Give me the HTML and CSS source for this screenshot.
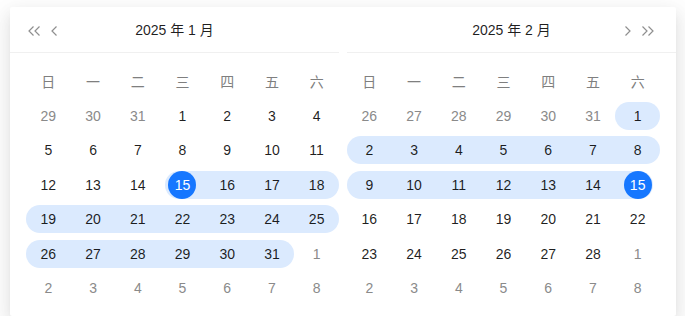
FILE: index.html
```html
<!DOCTYPE html>
<html lang="zh">
<head>
<meta charset="utf-8">
<link rel="stylesheet" href="styles.css">
</head>
<body>
<div class="picker">
  <div class="panel panel-left">
    <div class="head">
      <div class="nav nav-l">
        <svg class="ic2" width="13" height="10" viewBox="0 0 13 10"><polyline points="5.5,0.5 1,5 5.5,9.5"/><polyline points="11.5,0.5 7,5 11.5,9.5"/></svg>
        <svg class="ic1" width="6" height="10" viewBox="0 0 6 10"><polyline points="5.5,0.5 1,5 5.5,9.5"/></svg>
      </div>
      <div class="title">2025 年 1 月</div>
      <div class="nav"></div>
    </div>
    <div class="grid">
      <div class="wd">日</div><div class="wd">一</div><div class="wd">二</div><div class="wd">三</div><div class="wd">四</div><div class="wd">五</div><div class="wd">六</div>
      <div class="cell o"><span class="num">29</span></div><div class="cell o"><span class="num">30</span></div><div class="cell o"><span class="num">31</span></div><div class="cell"><span class="num">1</span></div><div class="cell"><span class="num">2</span></div><div class="cell"><span class="num">3</span></div><div class="cell"><span class="num">4</span></div>
      <div class="cell"><span class="num">5</span></div><div class="cell"><span class="num">6</span></div><div class="cell"><span class="num">7</span></div><div class="cell"><span class="num">8</span></div><div class="cell"><span class="num">9</span></div><div class="cell"><span class="num">10</span></div><div class="cell"><span class="num">11</span></div>
      <div class="cell"><span class="num">12</span></div><div class="cell"><span class="num">13</span></div><div class="cell"><span class="num">14</span></div><div class="cell r ss sel"><span class="num">15</span></div><div class="cell r"><span class="num">16</span></div><div class="cell r"><span class="num">17</span></div><div class="cell r re"><span class="num">18</span></div>
      <div class="cell r rs"><span class="num">19</span></div><div class="cell r"><span class="num">20</span></div><div class="cell r"><span class="num">21</span></div><div class="cell r"><span class="num">22</span></div><div class="cell r"><span class="num">23</span></div><div class="cell r"><span class="num">24</span></div><div class="cell r re"><span class="num">25</span></div>
      <div class="cell r rs"><span class="num">26</span></div><div class="cell r"><span class="num">27</span></div><div class="cell r"><span class="num">28</span></div><div class="cell r"><span class="num">29</span></div><div class="cell r"><span class="num">30</span></div><div class="cell r re"><span class="num">31</span></div><div class="cell o"><span class="num">1</span></div>
      <div class="cell o"><span class="num">2</span></div><div class="cell o"><span class="num">3</span></div><div class="cell o"><span class="num">4</span></div><div class="cell o"><span class="num">5</span></div><div class="cell o"><span class="num">6</span></div><div class="cell o"><span class="num">7</span></div><div class="cell o"><span class="num">8</span></div>
    </div>
  </div>
  <div class="panel panel-right">
    <div class="head">
      <div class="nav"></div>
      <div class="title">2025 年 2 月</div>
      <div class="nav nav-r">
        <svg class="ic1" width="6" height="10" viewBox="0 0 6 10"><polyline points="0.5,0.5 5,5 0.5,9.5"/></svg>
        <svg class="ic2" width="13" height="10" viewBox="0 0 13 10"><polyline points="1.5,0.5 6,5 1.5,9.5"/><polyline points="7.5,0.5 12,5 7.5,9.5"/></svg>
      </div>
    </div>
    <div class="grid">
      <div class="wd">日</div><div class="wd">一</div><div class="wd">二</div><div class="wd">三</div><div class="wd">四</div><div class="wd">五</div><div class="wd">六</div>
      <div class="cell o"><span class="num">26</span></div><div class="cell o"><span class="num">27</span></div><div class="cell o"><span class="num">28</span></div><div class="cell o"><span class="num">29</span></div><div class="cell o"><span class="num">30</span></div><div class="cell o"><span class="num">31</span></div><div class="cell r rs re"><span class="num">1</span></div>
      <div class="cell r rs"><span class="num">2</span></div><div class="cell r"><span class="num">3</span></div><div class="cell r"><span class="num">4</span></div><div class="cell r"><span class="num">5</span></div><div class="cell r"><span class="num">6</span></div><div class="cell r"><span class="num">7</span></div><div class="cell r re"><span class="num">8</span></div>
      <div class="cell r rs"><span class="num">9</span></div><div class="cell r"><span class="num">10</span></div><div class="cell r"><span class="num">11</span></div><div class="cell r"><span class="num">12</span></div><div class="cell r"><span class="num">13</span></div><div class="cell r"><span class="num">14</span></div><div class="cell r se sel"><span class="num">15</span></div>
      <div class="cell"><span class="num">16</span></div><div class="cell"><span class="num">17</span></div><div class="cell"><span class="num">18</span></div><div class="cell"><span class="num">19</span></div><div class="cell"><span class="num">20</span></div><div class="cell"><span class="num">21</span></div><div class="cell"><span class="num">22</span></div>
      <div class="cell"><span class="num">23</span></div><div class="cell"><span class="num">24</span></div><div class="cell"><span class="num">25</span></div><div class="cell"><span class="num">26</span></div><div class="cell"><span class="num">27</span></div><div class="cell"><span class="num">28</span></div><div class="cell o"><span class="num">1</span></div>
      <div class="cell o"><span class="num">2</span></div><div class="cell o"><span class="num">3</span></div><div class="cell o"><span class="num">4</span></div><div class="cell o"><span class="num">5</span></div><div class="cell o"><span class="num">6</span></div><div class="cell o"><span class="num">7</span></div><div class="cell o"><span class="num">8</span></div>
    </div>
  </div>
</div>
</body>
</html>
```
FILE: styles.css
```css
html, body {
  margin: 0;
  padding: 0;
  background: #ffffff;
}
body {
  padding: 7px 0 0 10px;
  font-family: "Liberation Sans", Arial, "Noto Sans CJK SC", sans-serif;
  font-size: 14px;
  color: rgba(0, 0, 0, 0.88);
}
.picker {
  width: 666px;
  height: 309px;
  background: #fff;
  display: flex;
  gap: 8px;
  border-radius: 2px;
  box-shadow: 0 6px 16px 0 rgba(0, 0, 0, 0.08), 0 3px 6px -4px rgba(0, 0, 0, 0.12), 0 9px 28px 8px rgba(0, 0, 0, 0.05);
}
.panel {
  width: 329px;
  display: flex;
  flex-direction: column;
}
.head {
  height: 46px;
  box-sizing: border-box;
  border-bottom: 1px solid #f0f0f0;
  display: grid;
  grid-template-columns: 1fr auto 1fr;
  align-items: center;
}
.title {
  font-size: 14px;
  color: rgba(0, 0, 0, 0.88);
  line-height: 20px;
  padding-top: 1px;
}
.nav {
  display: flex;
  align-items: center;
  padding-top: 3px;
}
.nav-l {
  padding-left: 18px;
  gap: 10px;
}
.nav-r {
  justify-content: flex-end;
  padding-right: 22px;
  gap: 10px;
}
.nav svg polyline {
  fill: none;
  stroke: #8f8f8f;
  stroke-width: 1.2;
}
.grid {
  display: grid;
  grid-template-columns: repeat(7, 1fr);
  grid-auto-rows: 34.5px;
  width: 313px;
  padding-top: 11px;
}
.panel-left .grid {
  margin-left: 16px;
}
.wd {
  display: flex;
  align-items: center;
  justify-content: center;
  font-family: "Noto Sans CJK SC", sans-serif;
  font-size: 14px;
  color: #7f7f7f;
}
.cell {
  position: relative;
  display: flex;
  align-items: center;
  justify-content: center;
}
.cell.r::before {
  content: "";
  position: absolute;
  left: 0;
  right: 0;
  top: 3.25px;
  bottom: 3.25px;
  background: #dbeafe;
}
.cell.rs::before,
.cell.ss::before {
  border-top-left-radius: 14px;
  border-bottom-left-radius: 14px;
}
.cell.re::before,
.cell.se::before {
  border-top-right-radius: 14px;
  border-bottom-right-radius: 14px;
}
.cell.ss::before {
  left: calc(50% - 17px);
}
.cell.se::before {
  right: calc(50% - 15px);
}
.num {
  position: relative;
  line-height: 20px;
}
.cell.o .num {
  color: #8a8a8a;
}
.cell.sel .num {
  width: 28px;
  height: 28px;
  border-radius: 50%;
  background: #1677ff;
  color: #fff;
  display: flex;
  align-items: center;
  justify-content: center;
}
```
